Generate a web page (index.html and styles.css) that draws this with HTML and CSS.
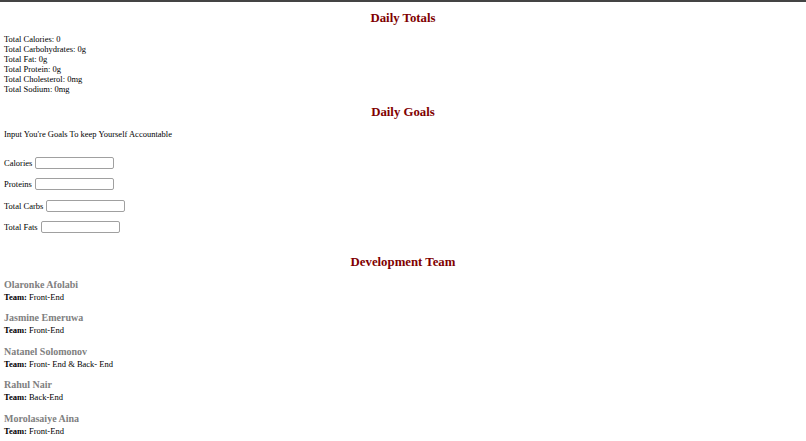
FILE: index.html
```html
<!DOCTYPE html>
<html>
<head>
<meta charset="utf-8">
<link rel="stylesheet" href="styles.css">
</head>
<body>
<div class="topbar"></div>
<main class="page">
  <section class="totals">
    <h2 class="heading">Daily Totals</h2>
    <div class="lines">
      <div>Total Calories: 0</div>
      <div>Total Carbohydrates: 0g</div>
      <div>Total Fat: 0g</div>
      <div>Total Protein: 0g</div>
      <div>Total Cholesterol: 0mg</div>
      <div>Total Sodium: 0mg</div>
    </div>
  </section>
  <section class="goals">
    <h2 class="heading">Daily Goals</h2>
    <div class="intro">Input You're Goals To keep Yourself Accountable</div>
    <form class="goal-form">
      <label class="row">Calories <input type="text" class="field"></label>
      <label class="row">Proteins <input type="text" class="field"></label>
      <label class="row">Total Carbs <input type="text" class="field"></label>
      <label class="row">Total Fats <input type="text" class="field"></label>
    </form>
  </section>
  <section class="team">
    <h2 class="heading">Development Team</h2>
    <div class="members">
      <div class="member"><div class="name">Olaronke Afolabi</div><div class="role"><b>Team:</b> Front-End</div></div>
      <div class="member"><div class="name">Jasmine Emeruwa</div><div class="role"><b>Team:</b> Front-End</div></div>
      <div class="member"><div class="name">Natanel Solomonov</div><div class="role"><b>Team:</b> Front- End &amp; Back- End</div></div>
      <div class="member"><div class="name">Rahul Nair</div><div class="role"><b>Team:</b> Back-End</div></div>
      <div class="member"><div class="name">Morolasaiye Aina</div><div class="role"><b>Team:</b> Front-End</div></div>
    </div>
  </section>
</main>
</body>
</html>
```

FILE: styles.css
```css
html, body {
  margin: 0;
  padding: 0;
  background: #fff;
}
body {
  font-family: "Liberation Serif", "Times New Roman", serif;
  font-size: 8.5px;
  line-height: 10px;
  color: #000;
}
.topbar {
  height: 2px;
  background: #444;
}
.page {
  padding: 0 4px;
}
.heading {
  margin: 0;
  font-size: 12.8px;
  line-height: 16px;
  font-weight: bold;
  color: #800000;
  text-align: center;
}
.totals .heading {
  margin-top: 8px;
}
.lines {
  margin-top: 8px;
}
.goals .heading {
  margin-top: 10px;
}
.intro {
  margin-top: 9px;
}
.goal-form {
  margin: 17.5px 0 0;
  display: flex;
  flex-direction: column;
  gap: 8.4px;
}
.row {
  display: flex;
  align-items: center;
  height: 13px;
}
.field {
  margin: 0 0 0 3px;
  width: 79px;
  height: 12px;
  box-sizing: border-box;
  border: 1px solid #a0a0a0;
  border-radius: 2px;
  padding: 0;
  background: #fff;
  font-size: 9px;
}
.team .heading {
  margin-top: 20px;
}
.members {
  margin-top: 9px;
  display: flex;
  flex-direction: column;
  gap: 10.6px;
}
.member .name {
  font-size: 10px;
  line-height: 12px;
  font-weight: bold;
  color: #808080;
  margin-bottom: 1px;
}
.role b {
  font-weight: bold;
}
```
